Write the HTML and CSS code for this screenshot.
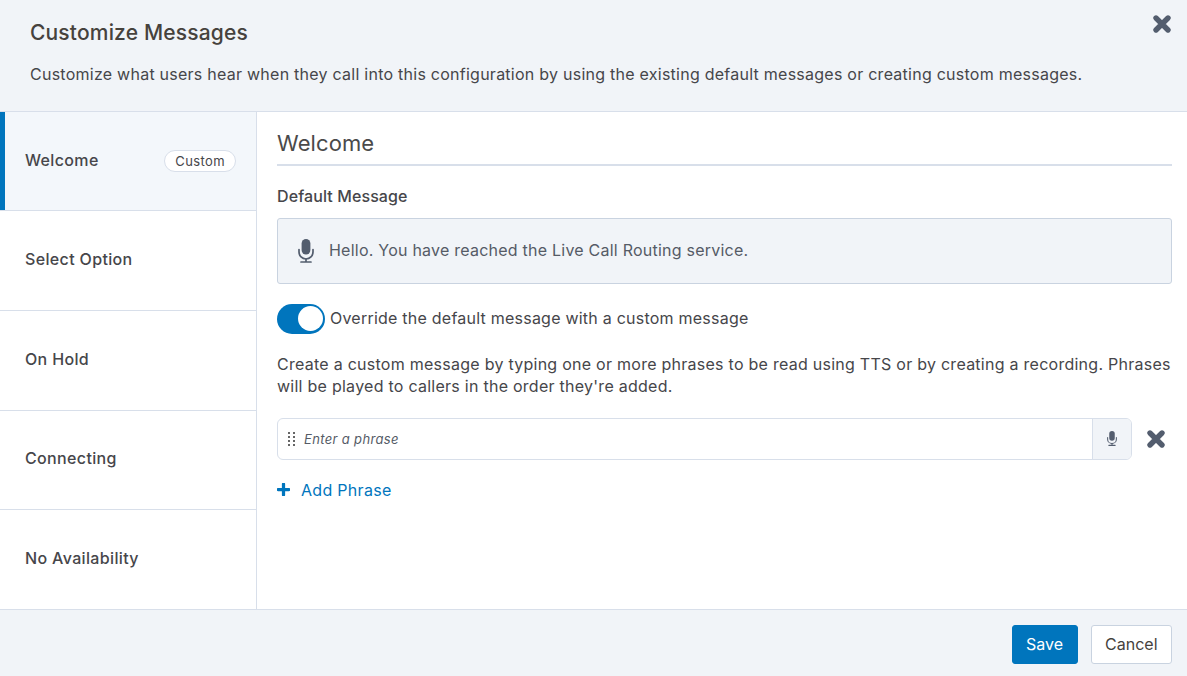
FILE: index.html
```html
<!DOCTYPE html>
<html lang="en">
<head>
<meta charset="utf-8">
<title>Customize Messages</title>
<link rel="stylesheet" href="styles.css">
</head>
<body>
<svg class="defs" width="0" height="0" aria-hidden="true">
  <symbol id="x" viewBox="0 0 20 20"><path d="M4 4 L16 16 M16 4 L4 16" stroke="currentColor" stroke-width="5.4" stroke-linecap="round" fill="none"/></symbol>
  <symbol id="mic" viewBox="0 0 16 24"><rect x="3.6" y="0" width="8.8" height="15.5" rx="4.4" fill="currentColor"/><path d="M1 10.5v2.5a7 7 0 0 0 14 0v-2.5" fill="none" stroke="currentColor" stroke-width="1.7" stroke-linecap="round"/><path d="M8 20v2.6M3 23h10" fill="none" stroke="currentColor" stroke-width="1.7" stroke-linecap="round"/></symbol>
</svg>
<div class="modal">
  <header class="head">
    <h1 class="title">Customize Messages</h1>
    <p class="lead">Customize what users hear when they call into this configuration by using the existing default messages or creating custom messages.</p>
    <button class="close"><svg class="close-icon"><use href="#x"/></svg></button>
  </header>
  <div class="body">
    <nav class="side">
      <a class="tab active"><span>Welcome</span><span class="badge">Custom</span></a>
      <a class="tab"><span>Select Option</span></a>
      <a class="tab"><span>On Hold</span></a>
      <a class="tab"><span>Connecting</span></a>
      <a class="tab last"><span>No Availability</span></a>
    </nav>
    <main class="main">
      <h2 class="section">Welcome</h2>
      <h3 class="label">Default Message</h3>
      <div class="default-box"><svg class="mic-lg"><use href="#mic"/></svg><span class="raised">Hello. You have reached the Live Call Routing service.</span></div>
      <div class="toggle-row"><span class="toggle"><span class="knob"></span></span><span class="raised">Override the default message with a custom message</span></div>
      <p class="help">Create a custom message by typing one or more phrases to be read using TTS or by creating a recording. Phrases will be played to callers in the order they're added.</p>
      <div class="phrase-row">
        <div class="phrase">
          <span class="grip"><i></i><i></i><i></i><i></i><i></i><i></i><i></i><i></i></span>
          <span class="placeholder">Enter a phrase</span>
          <span class="rec"><svg class="mic-sm"><use href="#mic"/></svg></span>
        </div>
        <svg class="remove"><use href="#x"/></svg>
      </div>
      <a class="add"><svg class="plus" viewBox="0 0 12 12"><path d="M6 1v10M1 6h10" stroke="currentColor" stroke-width="3" stroke-linecap="round"/></svg><span>Add Phrase</span></a>
    </main>
  </div>
  <footer class="foot">
    <button class="btn primary">Save</button>
    <button class="btn">Cancel</button>
  </footer>
</div>
</body>
</html>
```
FILE: styles.css
```css
* { box-sizing: border-box; }
html, body { margin: 0; height: 100%; }
body { font-family: Inter, "Open Sans", sans-serif; color: #4a4a4a; background: #fff; overflow: hidden; }
.defs { position: absolute; }
.modal { width: 1187px; height: 676px; display: flex; flex-direction: column; }
.head { position: relative; height: 111.7px; flex: none; background: #f1f4f8; border-bottom: 1px solid #d8dfea; padding: 20px 30px 0; }
.title { margin: 0; font-size: 21px; line-height: 26px; font-weight: 500; letter-spacing: .17px; color: #46423d; }
.lead { margin: 18px 0 0; font-size: 16px; line-height: 20px; letter-spacing: .25px; color: #46464a; white-space: nowrap; }
.close { position: absolute; top: 14px; right: 15px; width: 20px; height: 20px; padding: 0; border: 0; background: none; color: #535d6e; }
.close-icon { display: block; width: 20px; height: 20px; }
.body { flex: 1; display: flex; min-height: 0; }
.side { width: 257px; flex: none; display: flex; flex-direction: column; border-right: 1px solid #d8dfea; }
.tab { flex: 1; display: flex; align-items: center; justify-content: space-between; padding: 0 20px 2.8px 25px; font-size: 16px; font-weight: 500; letter-spacing: .35px; color: #46464a; border-bottom: 1px solid #d8dfea; }
.tab.last { border-bottom: 0; }
.tab.active { background: #f3f7fb; box-shadow: inset 5px 0 0 #0075bd; }
.badge { height: 22px; margin-top: 2.8px; padding: 0 10px; border: 1px solid #d8dfea; border-radius: 11px; background: #fff; font-size: 13px; line-height: 20px; font-weight: 400; letter-spacing: .4px; color: #46464a; }
.main { flex: 1; min-width: 0; padding: 15px 15px 0 20px; }
.section { margin: 0; height: 39px; font-size: 22px; line-height: 32px; font-weight: 400; letter-spacing: .1px; color: #4a4a4a; border-bottom: 2px solid #d8dfea; }
.label { margin: 20px 0 0; font-size: 16px; line-height: 20px; font-weight: 500; letter-spacing: .1px; color: #46464a; }
.default-box { display: flex; align-items: center; gap: 15px; height: 66px; margin-top: 12px; padding-left: 20px; background: #f1f4f8; border: 1px solid #c9d3e0; border-radius: 3px; font-size: 16px; letter-spacing: .23px; color: #555b66; }
.raised { margin-bottom: 2px; }
.mic-lg { width: 16px; height: 24px; color: #535d6e; }
.toggle-row { display: flex; align-items: center; gap: 5px; height: 30px; margin-top: 20px; font-size: 16px; letter-spacing: .23px; color: #46464a; }
.toggle { width: 48px; height: 30px; flex: none; border-radius: 15px; background: #0075bd; display: flex; align-items: center; justify-content: flex-end; padding-right: 2px; }
.knob { width: 25px; height: 25px; border-radius: 50%; background: #fff; }
.help { margin: 19px 0 0; font-size: 16px; line-height: 22px; letter-spacing: .26px; color: #46464a; }
.phrase-row { display: flex; align-items: center; margin-top: 21px; }
.phrase { flex: none; width: 855px; height: 42px; display: flex; align-items: center; border: 1px solid #d8dfea; border-radius: 6px; overflow: hidden; }
.grip { width: 8px; margin-left: 10px; display: grid; grid-template-columns: 2px 2px; column-gap: 2.5px; row-gap: 2px; flex: none; }
.grip i { width: 2px; height: 2px; background: #666; }
.placeholder { flex: 1; margin-left: 8px; font-size: 13px; font-style: italic; letter-spacing: .35px; color: #555b66; }
.rec { width: 39px; height: 100%; flex: none; display: flex; align-items: center; justify-content: center; background: #f1f4f8; border-left: 1px solid #d8dfea; }
.mic-sm { width: 10px; height: 15px; color: #535d6e; }
.remove { width: 20px; height: 20px; margin-left: 14px; color: #535d6e; }
.add { display: flex; align-items: center; gap: 11px; margin-top: 19px; font-size: 16px; line-height: 22px; letter-spacing: .3px; color: #0075bd; }
.plus { width: 13px; height: 13px; }
.foot { height: 67.3px; flex: none; display: flex; justify-content: flex-end; align-items: flex-start; gap: 13px; padding: 15px 15px 0; background: #f1f4f8; border-top: 1px solid #d8dfea; }
.btn { height: 39px; padding: 0 13.5px; font: 400 16px Inter, "Open Sans", sans-serif; color: #46423d; background: #fff; border: 1px solid #c9d3e0; border-radius: 3px; }
.btn.primary { background: #0075bd; border-color: #0075bd; color: #fff; }
```
